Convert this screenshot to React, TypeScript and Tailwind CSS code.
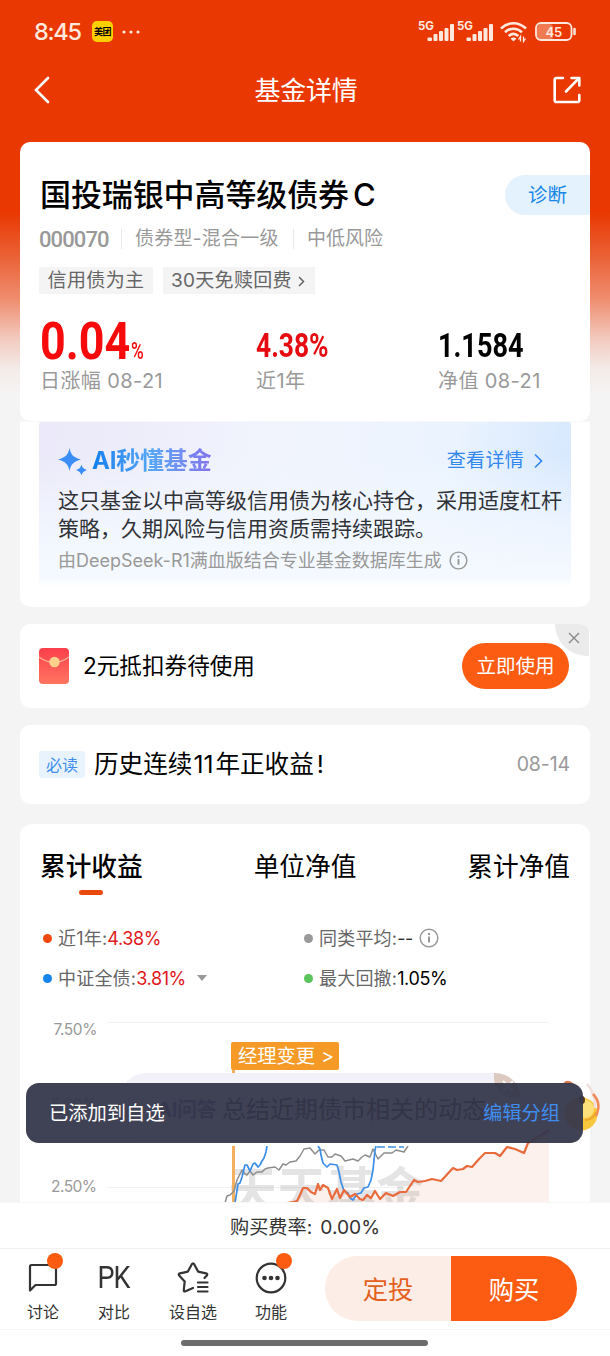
import { ReactNode } from 'react'
import clsx from 'clsx'

interface TabItem {
  label: string
  active?: boolean
}

interface ActionItem {
  label: string
  icon: ReactNode
  badge?: boolean
  className: string
}

const TABS: TabItem[] = [
  { label: '累计收益', active: true },
  { label: '单位净值' },
  { label: '累计净值' },
]

const GRAY_LINE =
  '225,1203 227,1196 230,1195 234,1191 237,1180 242,1170 245,1174 247,1175 250,1171 253,1175 257,1172 262,1172 265,1169 268,1168 275,1167 279,1170 283,1164 286,1165 290,1162 296,1161 300,1156 304,1149 310,1148 315,1154 319,1150 324,1150 328,1157 332,1157 335,1154 341,1156 345,1161 353,1159 358,1161 362,1157 365,1155 370,1157 373,1149 378,1159 384,1153 392,1153 396,1150 404,1152 408,1146'

const BLUE_LINE =
  '235,1203 238,1184 240,1183 242,1177 245,1165 247,1165 250,1171 253,1164 255,1163 258,1167 260,1165 262,1161 264,1158 266,1152 267,1146'

const BLUE_DIP =
  '318,1146 320,1149 321,1155 323,1163 327,1167 330,1164 337,1165 339,1172 341,1182 344,1191 348,1193 350,1198 353,1200 357,1194 361,1193 364,1188 368,1187 371,1180 373,1170 375,1150 376,1146'

const ORANGE_LINE =
  '287,1203 293,1202 297,1201 300,1195 303,1188 307,1188 311,1192 315,1194 318,1184 320,1190 323,1185 328,1188 332,1199 337,1189 340,1198 344,1190 350,1197 355,1194 360,1199 363,1200 367,1195 371,1198 375,1191 380,1199 386,1193 393,1196 400,1192 406,1192 414,1180 418,1182 425,1181 432,1179 441,1181 453,1168 457,1170 463,1169 467,1166 472,1167 479,1159 485,1153 495,1153 500,1156 507,1147 515,1149 524,1153 528,1143 538,1137 549,1130'

function StatusBar() {
  return (
    <div className="h-[63px] flex items-center pl-[34px] pr-[33px] text-[#ffe9df]">
      <span className="w-[48px] text-[23.500px] font-medium tracking-[-1.300px]">8:45</span>
      <span className="ml-[10px] w-[21px] h-[21px] rounded-[5px] bg-[#ffd000] text-black text-[9px] font-bold flex items-center justify-center tracking-[-0.5px]">
        美团
      </span>
      <svg className="ml-[9px]" width="20" height="4" viewBox="0 0 20 4" fill="currentColor">
        <circle cx="2" cy="2" r="1.6" />
        <circle cx="9" cy="2" r="1.6" />
        <circle cx="16" cy="2" r="1.6" />
      </svg>
      <div className="ml-auto flex items-center">
        <Signal />
        <Signal />
        <svg className="ml-[3px] mr-[7px]" width="28" height="22" viewBox="0 0 28 22" fill="none" stroke="currentColor" strokeWidth="2.6">
          <path d="M1 7.500C8.500.500 18.500.500 26 7.500" />
          <path d="M5 11.300c5-4.800 12-4.800 17 0" />
          <path d="M8.700 15c3-2.700 6.600-2.700 9.600 0" />
          <path d="M10.500 17.500c2-1.500 4-1.500 6 0L13.500 20.500z" fill="currentColor" stroke="none" />
          <path d="M20.500 20.500v-5l-2 3M23.500 15.500v5l2-3" strokeWidth="1.300" />
        </svg>
        <svg width="42" height="20" viewBox="0 0 42 20" fill="none">
          <rect x="2" y="2" width="16" height="16" rx="4" fill="#f07a52" />
          <rect x="1" y="1" width="35.500" height="17" rx="5" stroke="currentColor" strokeWidth="1.800" />
          <path d="M39.500 7v5" stroke="currentColor" strokeWidth="2.500" strokeLinecap="round" />
          <text x="18.800" y="14.500" textAnchor="middle" fontSize="13" fontWeight="600" fill="currentColor">
            45
          </text>
        </svg>
      </div>
    </div>
  )
}

function Signal() {
  return (
    <div className="relative w-[39px] h-[22px]">
      <span className="absolute -left-px top-0 text-[11.500px] leading-[11px] font-bold">5G</span>
      <svg className="absolute left-[8px] top-[3px]" width="28" height="18" viewBox="0 0 28 18" fill="currentColor">
        <rect x="0.500" y="13.500" width="4.500" height="3.500" rx="1" />
        <rect x="6.500" y="10" width="4" height="7" rx="1" />
        <rect x="12" y="7" width="4" height="10" rx="1" />
        <rect x="17.500" y="4" width="4" height="13" rx="1" />
        <rect x="23" y="0" width="4" height="17" rx="1" />
      </svg>
    </div>
  )
}

function NavBar() {
  return (
    <div className="h-[79px] pb-[26px] pl-[34px] pr-[29px] flex items-center justify-between text-white">
      <svg width="16" height="28" viewBox="0 0 16 28" fill="none" stroke="currentColor" strokeWidth="2.600" strokeLinecap="round">
        <path d="M14 2L2 14l12 12" />
      </svg>
      <h1 className="text-[26px] tracking-[-0.300px] ml-[9px] pt-px">基金详情</h1>
      <svg width="28" height="28" viewBox="0 0 28 28" fill="none" stroke="currentColor" strokeWidth="2.600" strokeLinecap="round" strokeLinejoin="round">
        <path d="M10 2H3.500A1.800 1.800 0 0 0 1.700 3.800v20.400A1.800 1.800 0 0 0 3.500 26h21a1.800 1.800 0 0 0 1.800-1.800V19" />
        <path d="M13 15.500L26 2.200M18.500 2H26.300V9.500" />
      </svg>
    </div>
  )
}

function InfoIcon({ className }: { className?: string }) {
  return (
    <svg className={className} viewBox="0 0 20 20" fill="none" stroke="currentColor" strokeWidth="1.500">
      <circle cx="10" cy="10" r="8.800" />
      <path d="M10 8.500V14.500" strokeWidth="2" />
      <circle cx="10" cy="6" r="1.200" fill="currentColor" stroke="none" />
    </svg>
  )
}

function FundCard() {
  return (
    <section className="h-[279px] shrink-0 bg-white rounded-[10px] pl-5 pt-[32px] flex flex-col overflow-hidden">
      <div className="h-[42px] flex items-center justify-between">
        <h2 className="text-[31px] font-medium text-black whitespace-nowrap tracking-[-0.100px] pt-px">
          国投瑞银中高等级债券<span className="ml-[4px]">C</span>
        </h2>
        <button className="w-[85px] h-[40px] pl-[23px] pt-px rounded-l-full bg-[#e4f2fd] text-[#1787e8] text-[19.500px] text-left">
          诊断
        </button>
      </div>
      <div className="mt-[11px] h-[24px] flex items-center text-[19px] text-[#999] whitespace-nowrap">
        <span className="-ml-px w-[70px] font-[Roboto] font-medium text-[22px] tracking-[-0.900px]">000070</span>
        <span className="ml-[12px] w-px h-[20px] bg-[#e8e8e8]" />
        <span className="ml-[13px] w-[145px] tracking-[0.250px]">债券型-混合一级</span>
        <span className="ml-[13px] w-px h-[20px] bg-[#e8e8e8]" />
        <span className="ml-[13px]">中低风险</span>
      </div>
      <div className="mt-[16px] -ml-px flex gap-[10px] text-[19px] text-[#666]">
        <span className="w-[114px] h-[27px] pt-[2px] bg-[#f4f4f4] flex items-center justify-center tracking-[0.400px]">信用债为主</span>
        <span className="w-[152px] h-[27px] pt-[2px] pl-2 bg-[#f4f4f4] flex items-center whitespace-nowrap tracking-[0.300px]">
          30天免赎回费
          <svg className="ml-[6px]" width="7" height="11" viewBox="0 0 7 11" fill="none" stroke="currentColor" strokeWidth="1.500">
            <path d="M1 1l4.500 4.500L1 10" />
          </svg>
        </span>
      </div>
      <div className="mt-[18px] grid grid-cols-[216px_182px_1fr] whitespace-nowrap">
        <div>
          <div className="h-[56px] flex items-end text-[#f60a0c] font-[Roboto] font-bold">
            <span className="w-[91px] text-[51px] leading-[53px] origin-left scale-x-[0.880]">0.04</span>
            <span className="text-[23px] leading-[33px] font-medium origin-left scale-x-[0.750]">%</span>
          </div>
          <Caption>日涨幅 08-21</Caption>
        </div>
        <div>
          <div className="h-[56px] flex items-end text-[#e60b10] font-[Roboto] font-bold">
            <span className="text-[33px] leading-[44px] origin-left scale-x-[0.800]">4.38%</span>
          </div>
          <Caption>近1年</Caption>
        </div>
        <div>
          <div className="h-[56px] flex items-end text-black font-[Roboto] font-bold">
            <span className="text-[33px] leading-[44px] origin-left scale-x-[0.820]">1.1584</span>
          </div>
          <Caption>净值 08-21</Caption>
        </div>
      </div>
    </section>
  )
}

function Caption({ children }: { children: ReactNode }) {
  return <div className="h-[26px] leading-[26px] text-[20px] text-[#999] tracking-[0.400px]">{children}</div>
}

function AiCard() {
  return (
    <section className="h-[186px] shrink-0 bg-white rounded-b-[10px] border-t border-[#f8f8f8] px-[19px]">
      <div className="h-[165px] rounded-[3px] pl-[19px] bg-[linear-gradient(to_bottom,transparent_20%,#f3f8ffcc_65%,#f5f9ff_94%,#fff_100%),linear-gradient(100deg,#ebe9f9_0%,#f1f4fd_45%,#eaf3fe_75%,#d4e6fe_100%)]">
        <div className="pt-[22px] flex items-center h-[56px]">
          <svg width="30" height="28" viewBox="0 0 30 28" fill="#3b8df8">
            <path d="M11.500 1C13 8 15.500 10.500 23 12.500 15.500 14.500 13 17 11.500 24 10 17 7.500 14.500 0 12.500 7.500 10.500 10 8 11.500 1z" />
            <path d="M23.500 17.500c.8 3 2 4.300 5.500 5.500-3.500 1.200-4.700 2.500-5.500 5.500-.8-3-2-4.300-5.500-5.500 3.500-1.200 4.700-2.500 5.500-5.500z" />
          </svg>
          <span className="ml-[4px] text-[24px] font-bold tracking-[-0.200px] bg-linear-to-r from-[#0d7ff0] via-[#55a6f6] to-[#8173ee] bg-clip-text text-transparent">
            AI秒懂基金
          </span>
          <span className="ml-auto mr-[9px] text-[19px] text-[#3287ef] tracking-[0.300px]">查看详情</span>
          <svg className="mr-[27px]" width="11" height="16" viewBox="0 0 11 16" fill="none" stroke="#3287ef" strokeWidth="1.700">
            <path d="M2 1.500L8.500 8 2 14.500" />
          </svg>
        </div>
        <p className="mt-[9px] text-[21px] leading-[28px] text-[#303238] whitespace-nowrap">
          这只基金以中高等级信用债为核心持仓，采用适度杠杆
          <br />
          策略，久期风险与信用资质需持续跟踪。
        </p>
        <div className="mt-[3px] h-[28px] flex items-center text-[18px] text-[#999] whitespace-nowrap">
          由DeepSeek-R1满血版结合专业基金数据库生成
          <InfoIcon className="ml-[7px] w-[19px] h-[19px]" />
        </div>
      </div>
    </section>
  )
}

function CouponCard() {
  return (
    <section className="relative mt-[17px] h-[84px] shrink-0 bg-white rounded-[10px] pl-[19px] pr-[21px] flex items-center overflow-hidden">
      <svg width="30" height="36" viewBox="0 0 30 36">
        <defs>
          <linearGradient id="packet" x1="0" y1="0" x2="0" y2="1">
            <stop offset="0" stopColor="#fb3f4b" />
            <stop offset="1" stopColor="#ff7561" />
          </linearGradient>
        </defs>
        <rect width="30" height="36" rx="4" fill="url(#packet)" />
        <path d="M0 9Q15 20 30 9" fill="none" stroke="#ffb09a" strokeWidth="1.200" />
        <circle cx="15.500" cy="14" r="5.200" fill="#ffd08c" />
      </svg>
      <span className="ml-[14px] text-[22.600px] text-black">2元抵扣券待使用</span>
      <div className="absolute right-px top-0 w-[34px] h-[32px] rounded-bl-[32px] bg-[#ebebeb] flex items-center justify-center pl-1 pb-[5px]">
        <svg width="12" height="12" viewBox="0 0 12 12" stroke="#888" strokeWidth="1.400">
          <path d="M1 1l10 10M11 1L1 11" />
        </svg>
      </div>
      <button className="relative ml-auto w-[107px] h-[46px] pt-[2px] rounded-full bg-[#fb5c12] text-white text-[19.500px]">立即使用</button>
    </section>
  )
}

function NoticeCard() {
  return (
    <section className="mt-[17px] h-[79px] shrink-0 bg-white rounded-[10px] pl-[19px] pr-5 flex items-center">
      <span className="w-[46px] h-[27px] rounded-[3px] bg-[#e9f3fe] text-[#3f8fee] text-[16px] flex items-center justify-center">必读</span>
      <span className="ml-[9px] text-[24.600px] text-black whitespace-nowrap">
        历史连续<span className="ml-px mr-[2px]">11</span>年正收益<span className="ml-[3px]">!</span>
      </span>
      <span className="ml-auto pt-px text-[19.500px] text-[#999] tracking-[-0.100px]">08-14</span>
    </section>
  )
}

interface LegendProps {
  dot: string
  label: string
  value: string
  valueClass: string
  children?: ReactNode
}

function Legend({ dot, label, value, valueClass, children }: LegendProps) {
  return (
    <div className="h-[40px] flex items-center text-[18px] text-[#666] whitespace-nowrap">
      <span className={clsx('w-[9px] h-[9px] rounded-full mr-[6px]', dot)} />
      <span className="tracking-[0.200px]">{label}:</span>
      <span className={clsx('tracking-[-0.400px]', valueClass)}>{value}</span>
      {children}
    </div>
  )
}

function Chart() {
  return (
    <div className="relative mt-[12px] h-[193px]">
      <svg className="block" width="570" height="193" viewBox="20 1010 570 193">
        <path d="M107 1022.500H549M107 1187.500H549" stroke="#f2f2f2" />
        <text x="53.500" y="1035" fontSize="15.500" fill="#999" textLength="44">7.50%</text>
        <text x="51" y="1110" fontSize="15.500" fill="#999" textLength="46">5.00%</text>
        <text x="51" y="1192" fontSize="15.500" fill="#999" textLength="46">2.50%</text>
        <polygon points={`${ORANGE_LINE} 549,1203`} fill="#fcf1ec" />
        <text x="228" y="1208" fontSize="49" fontWeight="700" fill="#777" fillOpacity="0.200" textLength="197">
          天天基金
        </text>
        <path d="M233.500 1068V1203" stroke="#f3b160" strokeWidth="3" />
        <g fill="none" strokeLinejoin="round">
          <polyline points={GRAY_LINE} stroke="#8d8d8d" strokeWidth="1.500" />
          <polyline points={BLUE_LINE} stroke="#3c8fe6" strokeWidth="1.700" />
          <polyline points={BLUE_DIP} stroke="#3c8fe6" strokeWidth="1.700" />
          <path d="M377 1147H404" stroke="#3c8fe6" strokeWidth="1.500" strokeDasharray="8 3" />
          <polyline points={ORANGE_LINE} stroke="#e96a3c" strokeWidth="2.200" />
        </g>
      </svg>
      <div className="absolute left-[211px] top-[32px] w-[108px] h-[28px] pt-px rounded-[2px] bg-[#f59a26] text-white text-[19.300px] pl-[7px] flex items-center whitespace-nowrap">
        经理变更<span className="ml-[6px]">&gt;</span>
      </div>
      <div className="absolute left-[100px] top-[63px] w-[401px] h-[73px] rounded-[26px] bg-linear-to-b from-[#f2f0f8] to-white overflow-hidden flex items-center pl-[37px] text-[24px] text-black whitespace-nowrap">
        <span className="w-[59px] font-bold text-[#4048a0] text-[20px] tracking-[-0.300px]">AI问答</span>
        <span className="ml-[6px]">总结近期债市相关的动态</span>
        <span className="absolute right-0 top-0 w-[27px] h-[25px] rounded-bl-[20px] bg-[#dcc9bf] flex items-center justify-center">
          <svg width="12" height="12" viewBox="0 0 12 12" stroke="#fff" strokeWidth="1.800">
            <path d="M1 1l10 10M11 1L1 11" />
          </svg>
        </span>
      </div>
    </div>
  )
}

function ProfitCard() {
  return (
    <section className="mt-5 shrink-0 bg-white rounded-t-[12px]">
      <div className="px-5 pt-[21px] flex justify-between">
        {TABS.map((tab) => (
          <div key={tab.label} className="flex flex-col items-center">
            <span className={clsx('h-[44px] leading-[44px] text-[25.700px] text-black', tab.active && 'font-medium')}>
              {tab.label}
            </span>
            <span className={clsx('mt-px w-[24px] h-[5px] rounded-full', tab.active && 'bg-[#e9490d]')} />
          </div>
        ))}
      </div>
      <div className="mt-[23px] pl-[23px] grid grid-cols-[261px_1fr]">
        <Legend dot="bg-[#f4480f]" label="近1年" value="4.38%" valueClass="text-[#e0171c]" />
        <Legend dot="bg-[#999]" label="同类平均" value="--" valueClass="text-[#333]">
          <InfoIcon className="ml-[6px] w-[20px] h-[20px] text-[#999]" />
        </Legend>
        <Legend dot="bg-[#1485ee]" label="中证全债" value="3.81%" valueClass="text-[#e0171c]">
          <span className="ml-[11px] border-x-[5px] border-x-transparent border-t-[6px] border-t-[#999]" />
        </Legend>
        <Legend dot="bg-[#5cc45c]" label="最大回撤" value="1.05%" valueClass="text-black" />
      </div>
      <Chart />
    </section>
  )
}

function Mascot() {
  return (
    <svg className="absolute left-[560px] top-[1076px]" width="48" height="62" viewBox="0 0 48 62">
      <path d="M2 9Q7 1 14 8H2z" fill="#d9764c" />
      <circle cx="21" cy="38" r="16.500" fill="#f8c73c" />
      <circle cx="25" cy="33" r="9" fill="#fde07a" />
      <ellipse cx="22" cy="24" rx="3" ry="4" fill="#5a3a1c" />
      <path d="M27 8Q36 18 35 32" fill="none" stroke="#f0dfdc" strokeWidth="2.500" />
      <path d="M33 18Q42 27 36 40" fill="none" stroke="#f08a58" strokeWidth="2.500" />
      <path d="M25 44Q33 44 36 36" fill="none" stroke="#eba42c" strokeWidth="2" />
    </svg>
  )
}

function Toast() {
  return (
    <div className="absolute left-[26px] top-[1083px] w-[557px] h-[60px] pt-px rounded-[13px] bg-[#35374b]/95 pl-[23px] pr-[23px] flex items-center justify-between text-[19.300px]">
      <span className="text-white">已添加到自选</span>
      <button className="text-[#3f8df0]">编辑分组</button>
    </div>
  )
}

const ACTIONS: ActionItem[] = [
  {
    label: '讨论',
    badge: true,
    className: 'w-[86px]',
    icon: (
      <svg width="30" height="30" viewBox="0 0 30 30" fill="none" stroke="#333" strokeWidth="2.200" strokeLinejoin="round">
        <path d="M2 3.500Q2 2 3.500 2H26.500Q28 2 28 3.500V20.500Q28 22 26.500 22H7.500L2 27.500z" />
      </svg>
    ),
  },
  {
    label: '对比',
    className: 'w-[56px]',
    icon: <span className="text-[31px] leading-[30px] font-[Roboto] text-[#333] tracking-[-1px] scale-x-[0.870]">PK</span>,
  },
  {
    label: '设自选',
    className: 'w-[102px]',
    icon: (
      <svg width="32" height="32" viewBox="0 0 32 32" fill="none" stroke="#333" strokeWidth="2.200" strokeLinecap="round" strokeLinejoin="round">
        <path d="M16 27L8.500 30.300Q6.700 31 6.800 29L7.700 20.500 2.200 14.500Q1 12.900 3 12.300L10.900 10.600 14.700 3.400Q16 1.400 17.300 3.400L21.100 10.600 29 12.300Q31 12.900 29.800 14.500L27.500 17" transform="translate(0 -1)" />
        <path d="M21 20.500H30.500M21 25H30.500M21 29.500H30.500" />
      </svg>
    ),
  },
  {
    label: '功能',
    badge: true,
    className: 'w-[54px]',
    icon: (
      <svg width="32" height="32" viewBox="0 0 32 32" fill="#333">
        <circle cx="16" cy="16" r="14.300" fill="none" stroke="#333" strokeWidth="2.200" />
        <circle cx="9.500" cy="16" r="2.300" />
        <circle cx="16" cy="16" r="2.300" />
        <circle cx="22.500" cy="16" r="2.300" />
      </svg>
    ),
  },
]

function Footer() {
  return (
    <footer className="h-[154px] shrink-0 bg-white border-t border-[#f7f7f7]">
      <div className="h-[46px] pt-[3px] border-b border-[#f2f2f2] flex items-center justify-center text-[19.200px] text-[#333]">
        购买费率:<span className="ml-[8px]">0.00%</span>
      </div>
      <div className="h-[81px] border-b border-[#f5f5f5] flex items-center">
        <div className="w-[325px] pt-[6px] flex">
          {ACTIONS.map((item) => (
            <button key={item.label} className={clsx('flex flex-col items-center text-[#333]', item.className)}>
              <span className="relative h-[34px] flex items-center justify-center">
                {item.icon}
                {item.badge && <span className="absolute -right-[5px] -top-[8px] w-4 h-4 rounded-full bg-[#fb5c12]" />}
              </span>
              <span className="mt-[5px] text-[16px] leading-[24px] whitespace-nowrap">{item.label}</span>
            </button>
          ))}
        </div>
        <div className="w-[252px] h-[65px] -mt-px grid grid-cols-2 rounded-full overflow-hidden text-[25.300px]">
          <button className="pt-[2px] bg-[#fcede6] text-[#e4601f]">定投</button>
          <button className="pt-[2px] bg-[#fb5c12] text-white">购买</button>
        </div>
      </div>
      <div className="mt-[10px] ml-[181px] w-[247px] h-[6px] rounded-full bg-[#6b6b6b]" />
    </footer>
  )
}

export default function App() {
  return (
    <div className="relative w-[610px] h-[1356px] overflow-hidden flex flex-col bg-[#f4f4f4] font-[Inter,'Noto_Sans_CJK_SC',sans-serif]">
      <main className="h-[1202px] shrink-0 overflow-hidden bg-[linear-gradient(to_bottom,#e93802_0px,#e93802_212px,#ea6034_255px,#ef8e70_300px,#f3c9bd_338px,#f4ebe8_368px,#f4f4f4_395px)]">
        <StatusBar />
        <NavBar />
        <div className="mx-5 flex flex-col">
          <FundCard />
          <AiCard />
          <CouponCard />
          <NoticeCard />
          <ProfitCard />
        </div>
      </main>
      <Footer />
      <Mascot />
      <Toast />
    </div>
  )
}
